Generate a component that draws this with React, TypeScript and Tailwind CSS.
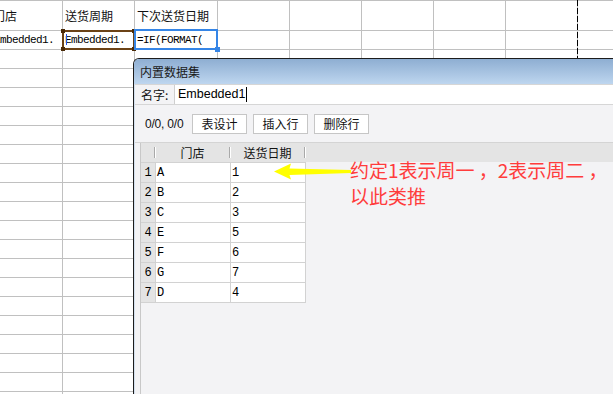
import React from "react";

const widths = [
  "w-[63px]",
  "w-[72px]",
  "w-[83px]",
  "w-[72px]",
  "w-[72px]",
  "w-[72px]",
  "w-[72px]",
  "w-[72px]",
  "w-[72px]",
];

function Sheet() {
  const rows = Array.from({ length: 20 });
  return (
    <div className="flex flex-col border-t border-[#c0c0c0]">
      <div className="flex h-[30px] shrink-0 border-b border-[#c0c0c0]">
        {widths.map((w, i) => (
          <div
            key={i}
            className={`${w} shrink-0 h-full border-r border-[#c0c0c0] flex items-center pl-[2px] whitespace-nowrap text-[12px] font-['Noto_Sans_CJK_SC',sans-serif] text-[#111]`}
          >
            {i === 0 && <span className="ml-[-9px]">门店</span>}
            {i === 1 && <span>送货周期</span>}
            {i === 2 && <span>下次送货日期</span>}
          </div>
        ))}
      </div>
      {rows.map((_, r) => (
        <div key={r} className="flex h-[19px] shrink-0 border-b border-[#c0c0c0]">
          {widths.map((w, i) => (
            <div
              key={i}
              className={`${w} shrink-0 h-full border-r border-[#c0c0c0] flex items-center pl-[1px] whitespace-nowrap text-[11px] tracking-[-0.6px] font-['Liberation_Mono',monospace] text-black`}
            >
              {r === 0 && i === 0 && <span className="ml-[-7px]">Embedded1.</span>}
              {r === 0 && i === 1 && <span className="ml-[1px]">Embedded1.</span>}
              {r === 0 && i === 2 && <span className="ml-[1px]">=IF(FORMAT(</span>}
            </div>
          ))}
        </div>
      ))}
    </div>
  );
}

function Dialog() {
  const data = [
    ["1", "A", "1"],
    ["2", "B", "2"],
    ["3", "C", "3"],
    ["4", "E", "5"],
    ["5", "F", "6"],
    ["6", "G", "7"],
    ["7", "D", "4"],
  ];
  return (
    <div className="absolute left-[133px] top-[58px] w-[520px] h-[345px] border-l border-t border-[#1c1c1c] rounded-tl-[6px] overflow-hidden bg-[#f3f3f5] flex flex-col font-['Noto_Sans_CJK_SC',sans-serif]">
      <div className="h-[25px] shrink-0 bg-gradient-to-b from-[#8eaed2] to-[#bed6ef] flex items-center pl-[6px] text-[12px] text-[#1a1a1a]">
        内置数据集
      </div>
      <div className="flex-1 flex flex-col border-l border-[#d3e0ef]">
        <div className="h-[21px] shrink-0 border-t border-b border-[#d6d6d6] flex">
          <div className="w-[39px] shrink-0 pl-[6px] flex items-center text-[12px] text-[#111]">名字:</div>
          <div className="flex-1 bg-white border-l border-[#cfcfcf] flex items-center pl-[3px] text-[12.5px] text-black font-['Liberation_Sans',sans-serif]">
            Embedded1
            <span className="ml-[1px] w-px h-[15px] bg-black" />
          </div>
        </div>
        <div className="h-[38px] shrink-0 border-b border-[#d4d4d4] flex items-center pl-[10px]">
          <span className="w-[47px] shrink-0 text-[12px] text-[#111] font-['Liberation_Sans',sans-serif] tracking-[-0.2px]">0/0, 0/0</span>
          <div className="flex gap-[6px]">
            {["表设计", "插入行", "删除行"].map((t) => (
              <div
                key={t}
                className="w-[55px] h-[20px] bg-white border border-[#c6c6c6] flex items-center justify-center text-[12px] text-[#111]"
              >
                {t}
              </div>
            ))}
          </div>
        </div>
        <div className="flex-1 ml-[5px] border-l border-[#c8c8c8] flex flex-col">
          <div className="h-[19px] shrink-0 bg-[#e4e4e4] flex items-center text-[12px] text-[#111]">
            <div className="w-[13px] shrink-0" />
            <div className="w-[2px] h-[11px] shrink-0 border-l border-r border-l-[#a9a9a9] border-r-white" />
            <div className="w-[73px] shrink-0 text-center">门店</div>
            <div className="w-[2px] h-[11px] shrink-0 border-l border-r border-l-[#a9a9a9] border-r-white" />
            <div className="w-[73px] shrink-0 text-center">送货日期</div>
            <div className="w-[2px] h-[11px] shrink-0 border-l border-r border-l-[#a9a9a9] border-r-white" />
          </div>
          <div className="w-[165px] border-t border-[#d2d2d2] flex flex-col">
            {data.map((row) => (
              <div key={row[0]} className="h-[20px] flex border-b border-[#d2d2d2] text-[12px] font-['Liberation_Mono',monospace] text-black">
                <div className="w-[15px] shrink-0 bg-[#e4e4e4] border-r border-[#d2d2d2] flex items-center justify-center">
                  {row[0]}
                </div>
                <div className="w-[75px] shrink-0 bg-white border-r border-[#d2d2d2] flex items-center pl-[1px]">
                  {row[1]}
                </div>
                <div className="w-[75px] shrink-0 bg-white border-r border-[#d2d2d2] flex items-center pl-[1px]">
                  {row[2]}
                </div>
              </div>
            ))}
          </div>
        </div>
      </div>
    </div>
  );
}

export default function App() {
  return (
    <div className="relative w-[613px] h-[394px] overflow-hidden bg-white">
      <Sheet />
      {/* page break dashed line */}
      <div className="absolute left-[577px] top-0 w-px h-[58px] bg-[repeating-linear-gradient(to_bottom,#000_0_6px,transparent_6px_8px)]" />
      {/* selected cell (brown) */}
      <div className="absolute left-[62px] top-[30px] w-[73px] h-[20px] border-2 border-[#6b4216]">
        <div className="absolute left-[-3px] top-[-3px] w-[4px] h-[4px] bg-[#4a2a08]" />
        <div className="absolute right-[-3px] top-[-3px] w-[4px] h-[4px] bg-[#4a2a08]" />
        <div className="absolute left-[-3px] bottom-[-3px] w-[4px] h-[4px] bg-[#4a2a08]" />
        <div className="absolute right-[-3px] bottom-[-3px] w-[4px] h-[4px] bg-[#4a2a08]" />
        <div className="absolute left-[2px] top-[2px] w-px h-[11px] bg-[#2255ee]" />
      </div>
      {/* active cell (blue) */}
      <div className="absolute left-[134px] top-[29px] w-[84px] h-[21px] border-2 border-[#3585e6]" />
      <div className="absolute left-[215px] top-[47px] w-[5px] h-[5px] bg-[#3585e6]" />
      <Dialog />
      {/* yellow arrow */}
      <svg className="absolute left-[270px] top-[160px]" width="84" height="24" viewBox="0 0 84 24">
        <polygon
          points="4,11.5 21,3.5 19.5,8.5 81,10 81,13 19.5,15 21,19.5"
          fill="#ffff00"
        />
      </svg>
      <div className="absolute left-[350px] top-[157px] text-[19px] leading-[26px] text-[#ff3c3c] whitespace-nowrap font-['Noto_Sans_CJK_SC',sans-serif]">
        <div>约定1表示周一 ，2表示周二 ，</div>
        <div>以此类推</div>
      </div>
    </div>
  );
}
